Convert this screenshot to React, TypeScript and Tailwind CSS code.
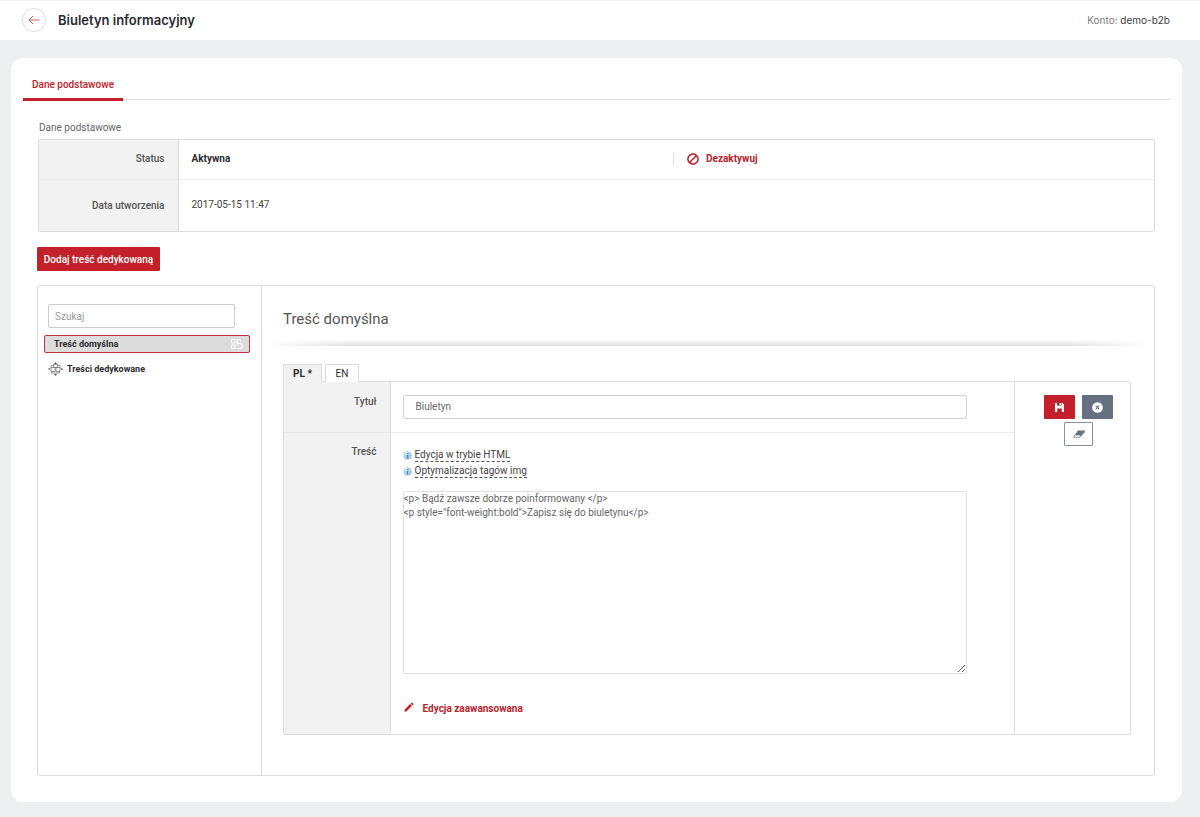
import { useState } from 'react';
import { FaBan } from 'react-icons/fa';
import { MdEdit } from 'react-icons/md';

const LANGS = [
  { code: 'pl', label: 'PL *' },
  { code: 'en', label: 'EN' },
];

const CONTENT = `<p> Bądź zawsze dobrze poinformowany </p>
<p style="font-weight:bold">Zapisz się do biuletynu</p>`;

function ArrowLeft() {
  return (
    <svg width="12" height="10" viewBox="0 0 12 10" fill="none" stroke="#cf5a48" strokeWidth="1" aria-hidden="true">
      <path d="M11.5 5H1M5 1L1 5l4 4" />
    </svg>
  );
}

function InfoIcon() {
  return (
    <svg width="9" height="9" viewBox="0 0 18 18" className="shrink-0" aria-hidden="true">
      <defs>
        <radialGradient id="info" cx="0.4" cy="0.35" r="0.7">
          <stop offset="0" stopColor="#d8edfb" />
          <stop offset="1" stopColor="#8fc0e2" />
        </radialGradient>
      </defs>
      <circle cx="9" cy="9" r="8.5" fill="url(#info)" />
      <path d="M8 4h3v2.4H8zM7 8h4l-1 5h1v1.5H7L8 9.5H7z" fill="#4a8cc0" />
    </svg>
  );
}

function SaveIcon() {
  return (
    <svg width="9" height="9" viewBox="0 0 9 9" fill="#fff" aria-hidden="true">
      <path d="M0 0h2v3h4.5V0h1L9 1.4V9H6.8V5.6H2.2V9H0zM2 2.6h5v3H2zM4.6 0h1.3v2H4.6z" />
    </svg>
  );
}

function CancelIcon() {
  return (
    <svg width="11" height="11" viewBox="0 0 11 11" aria-hidden="true">
      <circle cx="5.5" cy="5.5" r="5.3" fill="#fff" />
      <path d="M3.7 3.7l3.6 3.6M7.3 3.7L3.7 7.3" stroke="#667080" strokeWidth="1.1" />
    </svg>
  );
}

function EraserIcon() {
  return (
    <svg width="12" height="8" viewBox="0 0 12 8" fill="#667080" aria-hidden="true">
      <path d="M5 .5h6.2L8 5H1.8z" />
      <path d="M1.6 5H8L6.4 7.4H.8zM8 5l3.2-4.5v2L6.4 7.4" fill="#fff" stroke="#667080" strokeWidth=".7" strokeLinejoin="round" />
      <path d="M8 5l3.4-4.5.2 1.6-4 4.4z" />
    </svg>
  );
}

function RestoreIcon() {
  return (
    <svg width="12" height="11" viewBox="0 0 12 11" fill="none" stroke="#fff" strokeWidth="1" aria-hidden="true">
      <path d="M.5 .5h3.5v3.5H.5zM.5 6h3.5v3.5H.5zM6 4V.5h3.5V3M6 4.5h3a2.4 2.4 0 1 1 0 5H7M7.5 2.8L5.8 4.5l1.7 1.7" />
    </svg>
  );
}

function DedicatedIcon() {
  return (
    <svg width="15" height="14" viewBox="0 0 15 14" fill="none" stroke="#777" strokeWidth="0.8" aria-hidden="true">
      <path d="M5.5 2.5h4v3h-4zM3 5.5h4v4H3zM8 5.5h4v4H8zM3.5 9.5v1.5h8V9.5M3 3.5h2.5M9.5 3.5H12v2M3 3.5v2" />
      <path d="M7.5 0L5.8 2h3.4zM7.5 14l-1.7-2h3.4zM0 7l1.8-1.6v3.2zM15 7l-1.8-1.6v3.2z" fill="#666" stroke="none" />
    </svg>
  );
}

function Header() {
  return (
    <header className="flex h-10 items-center border-t border-[#eef2f3] bg-white pr-[30px] pb-0.5 pl-[22px] font-['Inter',sans-serif]">
      <button aria-label="Wstecz" className="flex size-6 items-center justify-center rounded-full border border-[#dcdcdc]">
        <ArrowLeft />
      </button>
      <h1 className="ml-3 text-[13px] font-semibold text-[#2a2a33]">Biuletyn informacyjny</h1>
      <p className="ml-auto text-[10px] text-[#7c7c84]">
        Konto: <span className="text-[#3c3c44]">demo-b2b</span>
      </p>
    </header>
  );
}

function SummaryTable() {
  return (
    <div className="ml-px overflow-hidden rounded-xs border border-[#dcdcdc]">
      <table className="w-full table-fixed">
        <colgroup>
          <col className="w-[139px]" />
          <col className="w-[495px]" />
          <col />
        </colgroup>
        <tbody>
          <tr className="h-[39px] border-b border-[#ececec]">
            <th className="border-r border-[#dcdcdc] bg-[#f2f2f2] pr-[13px] text-right font-medium text-[#555]">Status</th>
            <td className="pl-[13px] font-bold text-[#2c2c30]">Aktywna</td>
            <td>
              <button className="flex items-center font-bold text-[#b9222a]">
                <span className="mr-[13px] h-3 w-px bg-[#dcdcdc]" />
                <FaBan className="mr-[7px] size-3 text-[#c4202b] -scale-x-100" />
                Dezaktywuj
              </button>
            </td>
          </tr>
          <tr className="h-[52px]">
            <th className="border-r border-[#dcdcdc] bg-[#f2f2f2] pt-0.5 pr-[13px] text-right font-medium text-[#555]">Data utworzenia</th>
            <td colSpan={2} className="pl-[13px] text-[#444]">2017-05-15 11:47</td>
          </tr>
        </tbody>
      </table>
    </div>
  );
}

function Sidebar() {
  return (
    <aside className="w-[224px] shrink-0 border-r border-[#dcdcdc] pt-[18px] pr-[11px] pl-1.5">
      <input
        type="search"
        aria-label="Szukaj"
        placeholder="Szukaj"
        className="ml-1 h-6 w-[187px] rounded-xs border border-[#ccc] px-1.5 placeholder:text-[#999]"
      />
      <button className="mt-[7px] flex h-[18px] w-full items-center justify-between rounded-xs border border-[#c4303c] bg-[#dcdcdc] pr-1.5 pl-[9px] text-[9px] font-bold text-[#2c2c30]">
        Treść domyślna
        <RestoreIcon />
      </button>
      <button className="mt-2 ml-1 flex items-center gap-1 text-[9px] font-bold text-[#2c2c30]">
        <DedicatedIcon />
        Treści dedykowane
      </button>
    </aside>
  );
}

function Editor() {
  const [lang, setLang] = useState('pl');
  const [title, setTitle] = useState('Biuletyn');
  const [content, setContent] = useState(CONTENT);

  return (
    <section className="min-w-0 flex-1 pb-10">
      <h2 className="mt-[21px] ml-[21px] text-[15px] leading-6 text-[#555]">Treść domyślna</h2>
      <div className="mt-2 h-[7px] bg-linear-to-b from-white to-[#dedede] mask-x-from-90% mask-x-to-100%" />
      <div className="mt-[18px] mr-[23px] ml-[21px]">
        <div role="tablist" className="flex gap-[3px]">
          {LANGS.map(({ code, label }) => (
            <button
              key={code}
              role="tab"
              aria-selected={lang === code}
              onClick={() => setLang(code)}
              className={`relative -mb-px h-[18px] border border-b-0 border-[#dcdcdc] text-[#2c2c30] ${
                lang === code ? 'w-[39px] bg-[#f2f2f2] font-bold' : 'w-[34px] bg-white'
              }`}
            >
              {label}
            </button>
          ))}
        </div>
        <div className="overflow-hidden rounded-r-xs rounded-bl-xs border border-[#dcdcdc]">
          <table className="w-full table-fixed">
            <colgroup>
              <col className="w-[106px]" />
              <col />
              <col className="w-[116px]" />
            </colgroup>
            <tbody>
              <tr className="h-[50px]">
                <th className="border-r border-b border-r-[#dcdcdc] border-b-[#e8e8e8] bg-[#f2f2f2] pt-3 pr-[13px] text-right align-top font-medium text-[#555]">
                  <label htmlFor="title">Tytuł</label>
                </th>
                <td className="border-b border-[#ececec] pr-[47px] pl-3">
                  <input
                    id="title"
                    value={title}
                    onChange={(e) => setTitle(e.target.value)}
                    className="block h-6 w-full rounded-xs border border-[#d4d4d4] px-3 text-[#666]"
                  />
                </td>
                <td rowSpan={2} className="border-l border-[#dcdcdc] pt-[13px] align-top">
                  <div className="flex flex-wrap justify-center gap-x-[7px] gap-y-[3px] pl-[13px]">
                    <button aria-label="Zapisz" className="flex h-6 w-[31px] items-center justify-center rounded-[1px] bg-[#c4202b]">
                      <SaveIcon />
                    </button>
                    <button aria-label="Anuluj" className="flex h-6 w-[31px] items-center justify-center rounded-[1px] bg-[#667080]">
                      <CancelIcon />
                    </button>
                    <button aria-label="Wyczyść" className="flex h-6 w-[29px] items-center justify-center rounded-[1px] border border-[#8a919f]">
                      <EraserIcon />
                    </button>
                  </div>
                </td>
              </tr>
              <tr>
                <th className="border-r border-[#dcdcdc] bg-[#f2f2f2] pt-[11px] pr-[13px] text-right align-top font-medium text-[#555]">
                  <label htmlFor="content">Treść</label>
                </th>
                <td className="pt-[15px] pr-[47px] pb-[17px] pl-3">
                  <div className="flex flex-col items-start">
                    <button className="flex h-4 items-center gap-[3px] text-[#444]">
                      <InfoIcon />
                      <span className="border-b border-dashed border-[#555] leading-3">Edycja w trybie HTML</span>
                    </button>
                    <button className="flex h-4 items-center gap-[3px] text-[#444]">
                      <InfoIcon />
                      <span className="border-b border-dashed border-[#555] leading-3">Optymalizacja tagów img</span>
                    </button>
                  </div>
                  <textarea
                    id="content"
                    value={content}
                    onChange={(e) => setContent(e.target.value)}
                    className="mt-[11px] block h-[183px] w-full resize rounded-xs border border-[#e0e0e0] leading-[14px] text-[#666]"
                  />
                  <button className="mt-[27px] flex items-center gap-2 font-bold text-[#b9222a]">
                    <MdEdit className="mb-1 size-3 text-[#c4202b]" />
                    Edycja zaawansowana
                  </button>
                </td>
              </tr>
            </tbody>
          </table>
        </div>
      </div>
    </section>
  );
}

export default function App() {
  return (
    <div className="min-h-screen bg-[#edeff1] pb-[15px] font-['Roboto',sans-serif] text-[10px] leading-4 text-[#444]">
      <Header />
      <main className="mt-[18px] mr-[18px] ml-[11px] rounded-xl bg-white pt-4 pb-[26px]">
        <nav className="mr-3 ml-3 border-b border-[#e0e0e0]">
          <a href="#" className="-mb-0.5 inline-block h-[27px] w-[100px] border-b-[3px] border-[#c4202b] pt-[3px] text-center font-medium text-[#c4202b]">
            Dane podstawowe
          </a>
        </nav>
        <div className="mr-[27px] ml-[26px]">
          <p className="mt-5 mb-[3px] ml-0.5 text-[#666]">Dane podstawowe</p>
          <SummaryTable />
          <button className="mt-[15px] h-6 w-[123px] rounded-[1px] bg-[#c4202b] pt-px font-medium text-white">Dodaj treść dedykowaną</button>
          <div className="mt-[14px] flex rounded-xs border border-[#dcdcdc]">
            <Sidebar />
            <Editor />
          </div>
        </div>
      </main>
    </div>
  );
}
